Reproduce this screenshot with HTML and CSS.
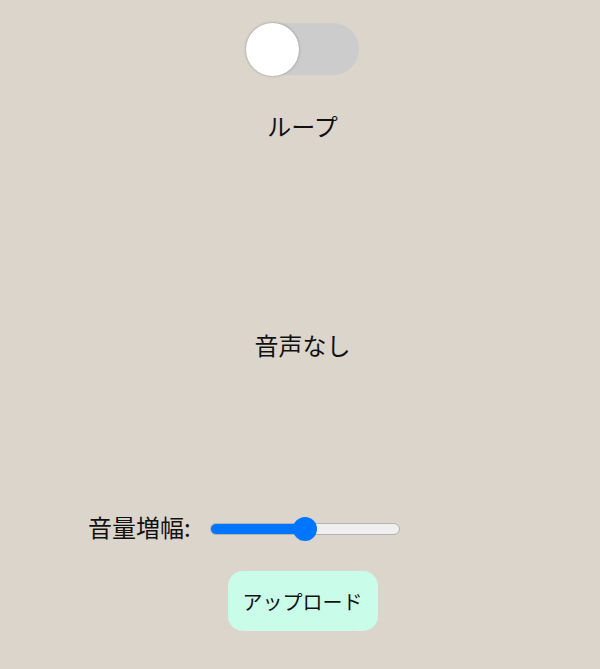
FILE: index.html
```html
<!DOCTYPE html>
<html lang="ja">
<head>
<meta charset="utf-8">
<link rel="stylesheet" href="styles.css">
</head>
<body>
<div class="app">
  <div class="toggle"><div class="knob"></div></div>
  <div class="loop-label">ループ</div>
  <div class="status">音声なし</div>
  <div class="gain-row">
    <span class="gain-label">音量増幅:</span>
    <input class="gain" type="range" min="0" max="100" value="50">
  </div>
  <button class="upload">アップロード</button>
</div>
</body>
</html>
```
FILE: styles.css
```css
html, body {
  margin: 0;
  padding: 0;
  background: #dcd5cc;
  font-family: "Noto Sans CJK JP", "Noto Sans", sans-serif;
  color: #111;
  overflow: hidden;
}
.app {
  display: flex;
  flex-direction: column;
  align-items: center;
  width: 605px;
  height: 669px;
}
.toggle {
  margin-top: 23px;
  width: 113px;
  height: 52px;
  border-radius: 26px;
  background: #cccccc;
  display: flex;
  align-items: center;
}
.knob {
  width: 53px;
  height: 53px;
  border-radius: 50%;
  background: #fff;
  box-shadow: 0 0 3px rgba(0,0,0,0.3);
}
.loop-label {
  margin-top: 34px;
  font-size: 24px;
  line-height: 34px;
}
.status {
  margin-top: 185px;
  font-size: 24px;
  line-height: 34px;
}
.gain-row {
  align-self: flex-start;
  margin-left: 88px;
  margin-top: 148px;
  display: flex;
  align-items: center;
  gap: 19px;
  height: 34px;
}
.gain-label {
  font-size: 24px;
  line-height: 34px;
}
.gain {
  -webkit-appearance: none;
  appearance: none;
  width: 190px;
  height: 24px;
  margin: 3px 0 0;
  background: transparent;
}
.gain::-webkit-slider-runnable-track {
  height: 12px;
  border-radius: 6px;
  box-sizing: border-box;
  border: 1px solid #b3b3b3;
  background: linear-gradient(to right, #0075ff 0, #0075ff 50%, #efefef 50%, #efefef 100%);
}
.gain::-webkit-slider-thumb {
  -webkit-appearance: none;
  appearance: none;
  width: 24px;
  height: 24px;
  border-radius: 50%;
  background: #0075ff;
  margin-top: -7px;
  border: none;
}
.upload {
  margin-top: 27px;
  width: 150px;
  height: 60px;
  border: none;
  border-radius: 15px;
  background: #c9fce9;
  font-family: "Noto Sans CJK JP", "Noto Sans", sans-serif;
  font-size: 20px;
  color: #111;
  padding: 0;
}
```
